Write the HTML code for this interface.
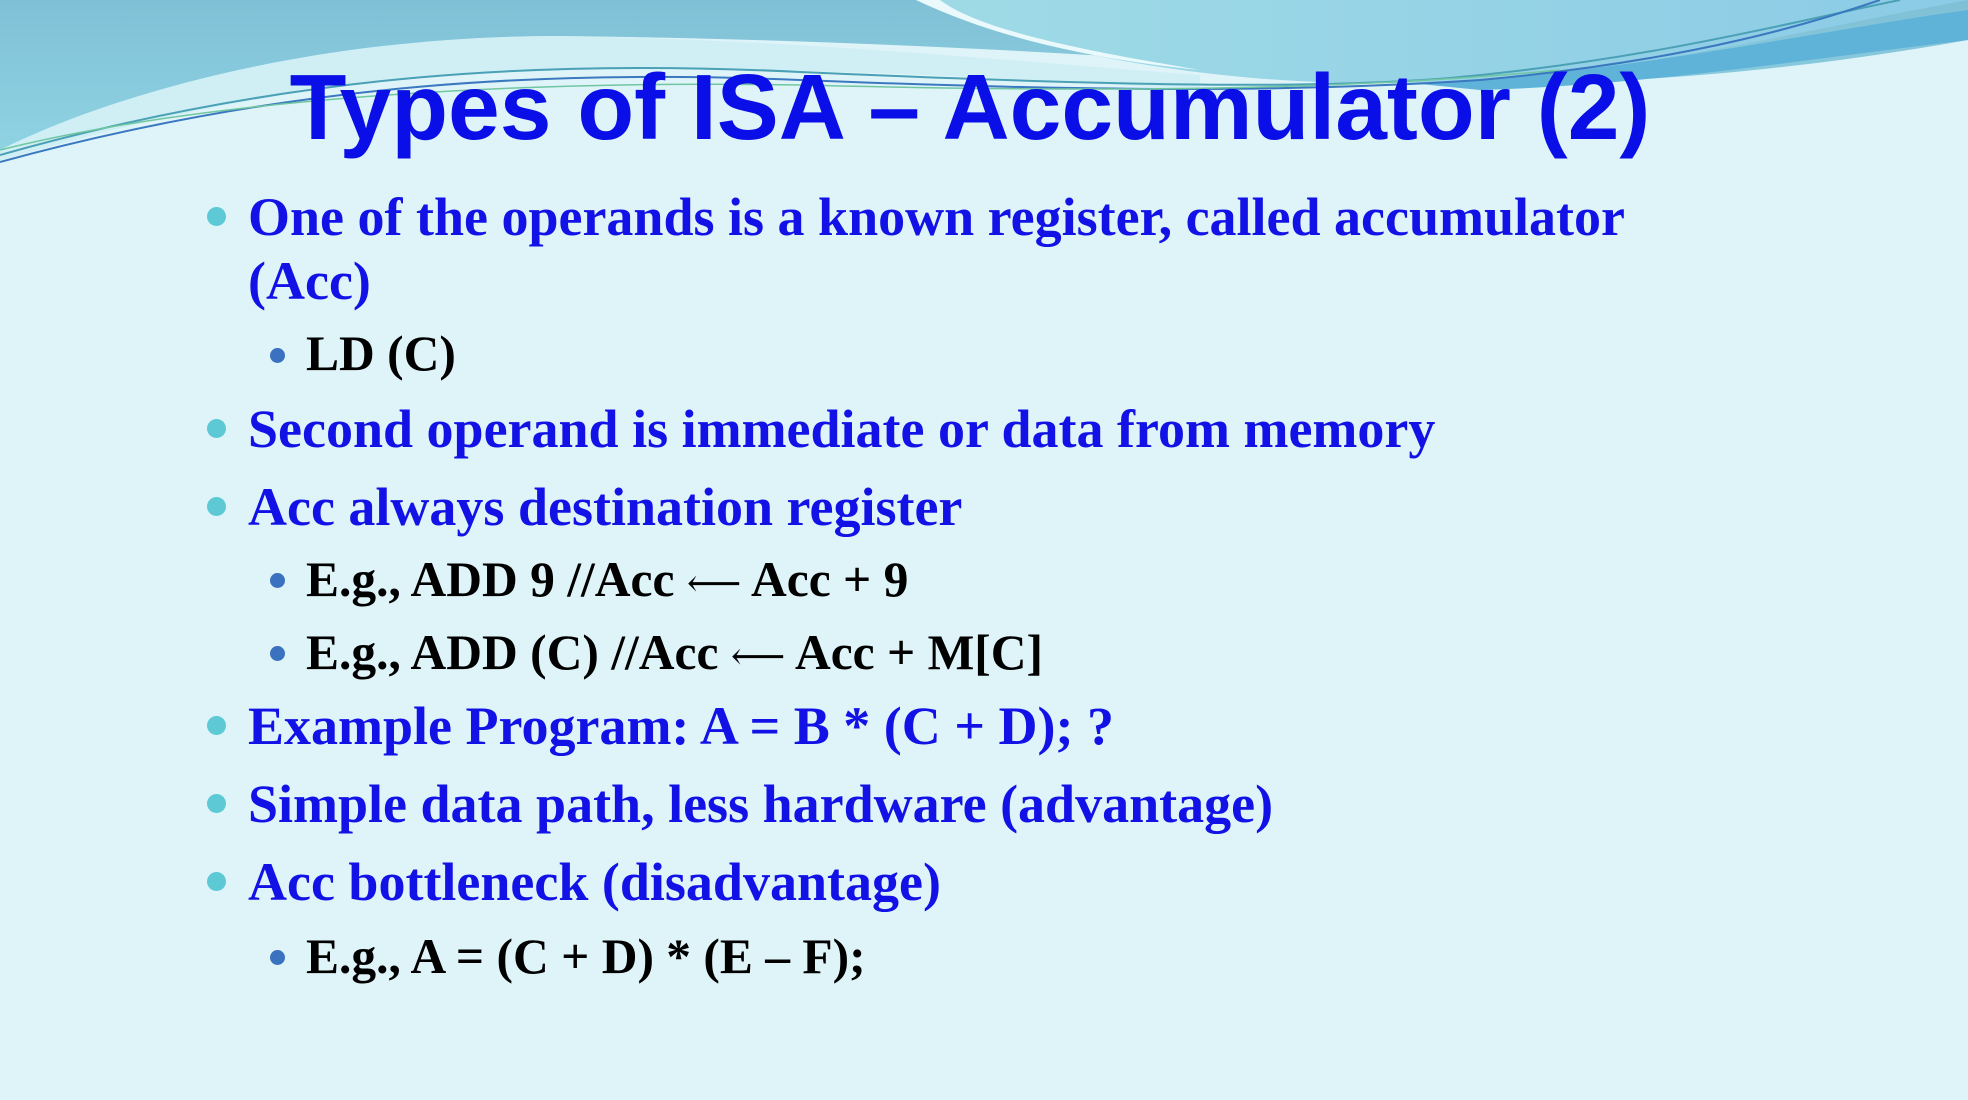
<!DOCTYPE html>
<html><head><meta charset="utf-8"><style>
html,body{margin:0;padding:0}
body{width:1968px;height:1100px;position:relative;overflow:hidden;background:#dff4f9;font-family:"Liberation Serif",serif}
svg.bg{position:absolute;left:0;top:0}
.t{position:absolute;left:-14px;top:52px;width:1968px;text-align:center;font-family:"Liberation Sans",sans-serif;font-weight:bold;font-size:93px;color:#0a0fe8;line-height:110px;white-space:nowrap}
.l{position:absolute;white-space:nowrap;font-weight:bold;line-height:1}
.m{left:248px;font-size:54px;color:#1212e6}
.s{left:306px;font-size:49.5px;color:#000}
.ar{font-family:"DejaVu Serif",serif;font-weight:normal;font-size:38px}
.b1{position:absolute;left:207px;width:19px;height:19px;border-radius:50%;background:#5cc9d5}
.b2{position:absolute;left:270px;width:15px;height:15px;border-radius:50%;background:#3b72c0}
</style></head><body>
<svg class="bg" width="1968" height="1100" viewBox="0 0 1968 1100">
<defs>
<linearGradient id="g1" x1="0" y1="0" x2="0" y2="1"><stop offset="0" stop-color="#80c0d6"/><stop offset="1" stop-color="#8fd3e3"/></linearGradient>
<linearGradient id="g2" x1="0" y1="0" x2="1" y2="0"><stop offset="0" stop-color="#9fdbe6"/><stop offset="1" stop-color="#8ccbe6"/></linearGradient>
</defs>
<path d="M0 0 H1968 V40 C1800 70 1600 90 1440 80 C1200 60 900 40 560 36 C300 36 100 100 0 150 Z" fill="url(#g1)"/>
<path d="M0 150 C100 100 300 36 560 36 C800 40 1000 60 1200 75 L1200 90 C900 70 600 60 400 80 C200 100 80 140 0 160 Z" fill="#c8ecf4" opacity="0.7"/>
<path d="M916 0 C1050 60 1250 90 1440 82 C1650 72 1800 30 1968 0 Z" fill="url(#g2)"/>
<path d="M916 0 C1000 40 1100 60 1200 70 C1080 50 980 30 940 0 Z" fill="#eaf9fc"/>
<path d="M1420 84 C1650 70 1820 30 1968 10 L1968 40 C1800 60 1650 85 1480 90 Z" fill="#5fb3d8"/>
<path d="M0 155 C300 70 560 60 800 72 C1100 85 1300 90 1450 78 C1650 60 1800 20 1900 0" fill="none" stroke="#4aa0b5" stroke-width="2"/>
<path d="M0 162 C300 80 560 70 800 80 C1100 92 1300 92 1480 80 C1700 60 1820 20 1880 0" fill="none" stroke="#3a78c0" stroke-width="2"/>
<path d="M0 150 C200 100 500 80 800 85 C1000 90 1300 95 1560 70" fill="none" stroke="#6fc6a0" stroke-width="1.5"/>
</svg>
<div class="t">Types of ISA – Accumulator (2)</div>

<div class="b1" style="top:207px"></div>
<div class="l m" style="top:190px">One of the operands is a known register, called accumulator</div>
<div class="l m" style="top:254px">(Acc)</div>
<div class="b2" style="top:348px"></div>
<div class="l s" style="top:329px">LD (C)</div>
<div class="b1" style="top:419px"></div>
<div class="l m" style="top:402px">Second operand is immediate or data from memory</div>
<div class="b1" style="top:497px"></div>
<div class="l m" style="top:480px">Acc always destination register</div>
<div class="b2" style="top:573px"></div>
<div class="l s" style="top:555px">E.g., ADD 9 //Acc <span class="ar">⟵</span> Acc + 9</div>
<div class="b2" style="top:646px"></div>
<div class="l s" style="top:628px">E.g., ADD (C) //Acc <span class="ar">⟵</span> Acc + M[C]</div>
<div class="b1" style="top:716px"></div>
<div class="l m" style="top:699px">Example Program: A = B * (C + D); ?</div>
<div class="b1" style="top:794px"></div>
<div class="l m" style="top:777px">Simple data path, less hardware (advantage)</div>
<div class="b1" style="top:872px"></div>
<div class="l m" style="top:855px">Acc bottleneck (disadvantage)</div>
<div class="b2" style="top:950px"></div>
<div class="l s" style="top:932px">E.g., A = (C + D) * (E – F);</div>
</body></html>
